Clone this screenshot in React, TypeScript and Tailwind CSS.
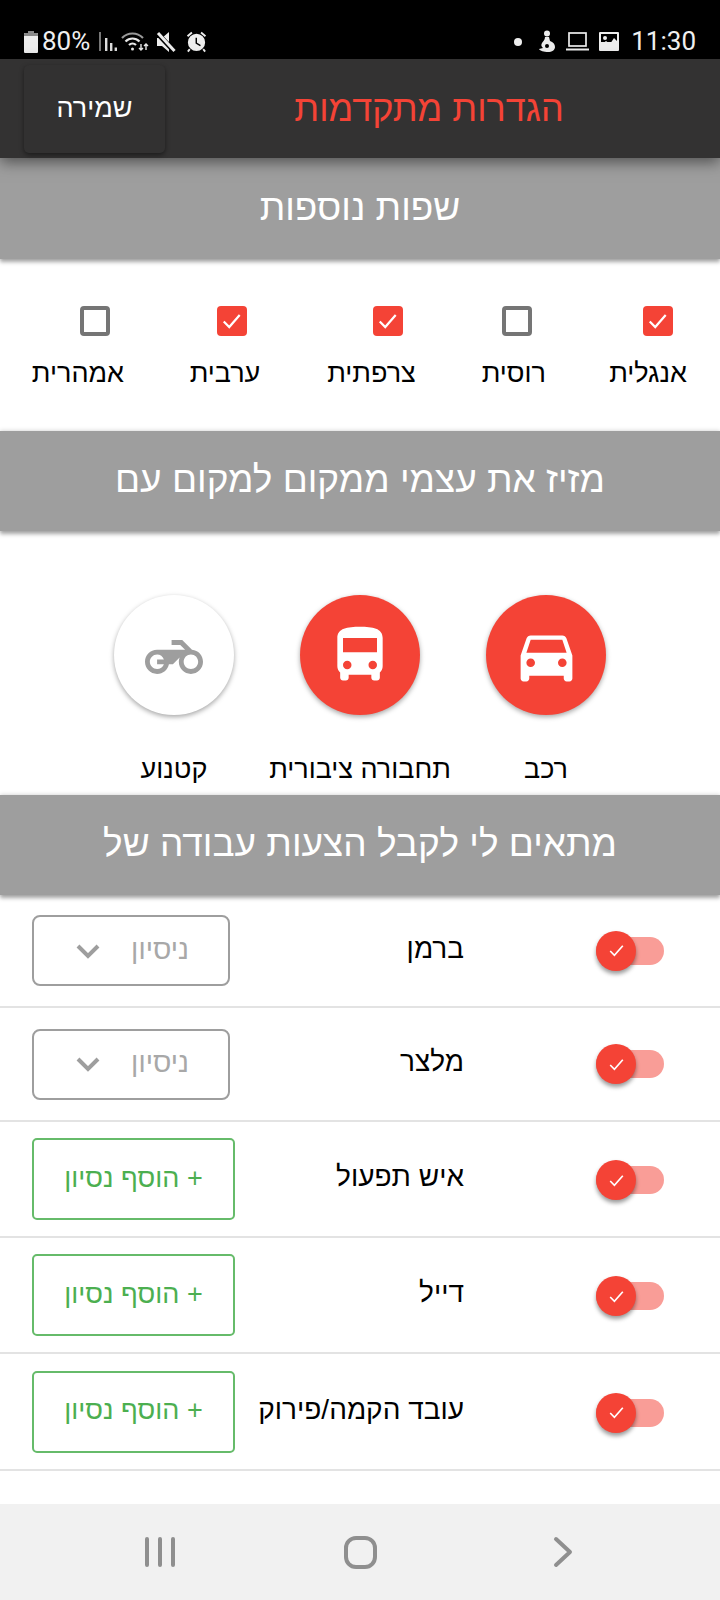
import React from "react";

const font = "font-['Liberation_Sans',sans-serif]";

const CAR = "M18.92 6.01C18.72 5.42 18.16 5 17.5 5h-11c-.66 0-1.21.42-1.42 1.01L3 12v8c0 .55.45 1 1 1h1c.55 0 1-.45 1-1v-1h12v1c0 .55.45 1 1 1h1c.55 0 1-.45 1-1v-8l-2.08-5.99zM6.5 16c-.83 0-1.5-.67-1.5-1.5S5.67 13 6.5 13s1.5.67 1.5 1.5S7.33 16 6.5 16zm11 0c-.83 0-1.5-.67-1.5-1.5s.67-1.5 1.5-1.5 1.5.67 1.5 1.5-.67 1.5-1.5 1.5zM5 11l1.5-4.5h11L19 11H5z";
const BUS = "M4 16c0 .88.39 1.67 1 2.22V20c0 .55.45 1 1 1h1c.55 0 1-.45 1-1v-1h8v1c0 .55.45 1 1 1h1c.55 0 1-.45 1-1v-1.78c.61-.55 1-1.34 1-2.22V6c0-3.5-3.58-4-8-4s-8 .5-8 4v10zm3.5 1c-.83 0-1.5-.67-1.5-1.5S6.67 14 7.5 14s1.5.67 1.5 1.5S8.33 17 7.5 17zm9 0c-.83 0-1.5-.67-1.5-1.5s.67-1.5 1.5-1.5 1.5.67 1.5 1.5-.67 1.5-1.5 1.5zm1.5-6H6V6h12v5z";
const BIKE = "M19.44 9.03L15.41 5H11v2h3.59l2 2H5c-2.8 0-5 2.2-5 5s2.2 5 5 5c2.46 0 4.45-1.69 4.9-4h1.65l2.77-2.77c-.21.54-.32 1.14-.32 1.77 0 2.8 2.2 5 5 5s5-2.2 5-5c0-2.65-1.97-4.77-4.56-4.97zM7.82 15C7.4 16.15 6.28 17 5 17c-1.63 0-3-1.37-3-3s1.37-3 3-3c1.28 0 2.4.85 2.82 2H5v2h2.82zM19 17c-1.66 0-3-1.34-3-3s1.34-3 3-3 3 1.34 3 3-1.34 3-3 3z";

function Band({ children, h = "h-[100px]" }: { children: React.ReactNode; h?: string }) {
  return (
    <div className={`relative z-10 ${h} shrink-0 bg-[#9e9e9e] flex items-center justify-center text-white text-[37px] shadow-[0_3px_4px_rgba(0,0,0,0.35),0_-1px_4px_rgba(0,0,0,0.12)]`}>
      <span className="-mt-[2px]">{children}</span>
    </div>
  );
}

function Check({ on, w, label }: { on: boolean; w: string; label: string }) {
  return (
    <div className={`${w} flex flex-col items-start`}>
      {on ? (
        <div className="mr-[14px] w-[30px] h-[30px] rounded-[4px] bg-[#f44336] flex items-center justify-center">
          <svg width="22" height="22" viewBox="0 0 20 20" fill="none" stroke="#fff" strokeWidth="2"><path d="M2.5 10.5l5 5L17 4.5" /></svg>
        </div>
      ) : (
        <div className="mr-[14px] w-[30px] h-[30px] rounded-[4px] border-[4px] border-[#757575]" />
      )}
      <div className="mt-[19px] w-full text-center text-[27px] leading-[36px] text-black whitespace-nowrap">{label}</div>
    </div>
  );
}

function Transport({ d, on, label, size, nudge }: { d: string; on: boolean; label: string; size: number; nudge?: string }) {
  return (
    <div className="w-[186px] flex flex-col items-center">
      <div className={`w-[120px] h-[120px] rounded-full flex items-center justify-center shadow-[0_2px_5px_rgba(0,0,0,0.35)] ${on ? "bg-[#f44336]" : "bg-white"}`}>
        <svg className={nudge} width={size} height={size} viewBox="0 0 24 24" fill={on ? "#fff" : "#9e9e9e"}><path d={d} /></svg>
      </div>
      <div className="mt-[36px] text-[27px] leading-[36px] text-black whitespace-nowrap">{label}</div>
    </div>
  );
}

function Toggle({ low }: { low?: boolean }) {
  return (
    <div className={`relative w-[68px] h-[40px] shrink-0 flex items-center ${low ? "mt-[2px]" : ""}`}>
      <div className="w-full h-[28px] rounded-full bg-[#f99d97]" />
      <div className="absolute left-0 top-0 w-[40px] h-[40px] rounded-full bg-[#f44336] flex items-center justify-center shadow-[0_3px_4px_rgba(0,0,0,0.4)]">
        <svg width="21" height="21" viewBox="0 0 20 20" fill="none" stroke="#fff" strokeWidth="1.6"><path d="M4 10.5l4 4L16 5.5" /></svg>
      </div>
    </div>
  );
}

function Row({ label, h, green }: { label: string; h: string; green?: boolean }) {
  return (
    <div className={`${h} shrink-0 flex items-center border-b-2 border-[#e3e3e3] pr-[56px] pl-[32px]`}>
      <Toggle low={green} />
      <div className="flex-1 pr-[132px] -mt-[4px] text-[28px] leading-[36px] text-black whitespace-nowrap">{label}</div>
      {green ? (
        <div className="w-[203px] h-[82px] shrink-0 rounded-[5px] border-2 border-[#66bb6a] flex items-center justify-center text-[27px] text-[#4caf50]">
          <span className="-mt-[2px]">+ הוסף נסיון</span>
        </div>
      ) : (
        <div className="w-[198px] h-[71px] shrink-0 rounded-[8px] border-2 border-[#9e9e9e] flex items-center justify-center gap-[31px] pl-[3px] text-[28px] text-[#a8a8a8]">
          <span className="-mt-[2px]">ניסיון</span>
          <svg width="24" height="16" viewBox="0 0 24 16" fill="none" stroke="#9e9e9e" strokeWidth="4"><path d="M2 3l10 10L22 3" /></svg>
        </div>
      )}
    </div>
  );
}

export default function App() {
  return (
    <div dir="rtl" className={`${font} w-[720px] h-[1600px] bg-white flex flex-col overflow-hidden`}>
      <div dir="ltr" className="h-[59px] shrink-0 bg-black text-[#f0f0f0] flex items-center justify-between pl-[24px] pr-[24px] pt-[24px] font-['Roboto',sans-serif] text-[26px]">
        <div className="flex items-center">
          <svg width="14" height="22" viewBox="0 0 14 22" fill="#eee"><path d="M4 0h6v2h3a1 1 0 011 1v18a1 1 0 01-1 1H1a1 1 0 01-1-1V3a1 1 0 011-1h3z" /><path d="M4 0h6v2h3a1 1 0 011 1v2H0V3a1 1 0 011-1h3z" fill="#8a8a8a" /></svg>
          <span className="ml-[4px] leading-[25px]">80%</span>
          <svg className="ml-[9px]" width="18" height="19" viewBox="0 0 18 19" fill="#ddd"><rect x="0" y="0" width="2" height="19" fill="#777" /><rect x="6" y="6" width="2.4" height="13" /><rect x="11" y="11" width="2.4" height="8" /><rect x="15.6" y="15.5" width="2.4" height="3.5" /></svg>
          <svg className="ml-[4px]" width="28" height="21" viewBox="0 0 28 21" fill="none" stroke="#e8e8e8" strokeWidth="2.2"><path d="M1 7c6-6 15-6 21 0" stroke="#999" /><path d="M4.5 10.5c4-4 10-4 14 0" /><path d="M8 14c2-2 5-2 7 0" /><circle cx="11.5" cy="18" r="1.5" fill="#e8e8e8" stroke="none" /><path d="M20 13v6M18 17l2 2 2-2M25 19v-6M23 15l2-2 2 2" strokeWidth="1.4" /></svg>
          <svg className="ml-[7px]" width="20" height="22" viewBox="0 0 20 22"><path d="M1 7h5l7-6v20l-7-6H1z" fill="#eee" /><path d="M1 2l17 18" stroke="#000" strokeWidth="5" /><path d="M2 2l16.5 18" stroke="#eee" strokeWidth="3" /></svg>
          <svg className="ml-[9px]" width="23" height="23" viewBox="0 0 24 24" fill="#eee"><path d="M22 5.72l-4.6-3.86-1.29 1.53 4.6 3.86L22 5.72zM7.88 3.39L6.6 1.86 2 5.71l1.29 1.53 4.59-3.85zM12 4a9 9 0 100 18 9 9 0 000-18z" /><path d="M12.5 8H11v6l4.75 2.85.75-1.23-4-2.37z" fill="#000" /><path d="M5 20l-2 2.5M19 20l2 2.5" stroke="#eee" strokeWidth="2" /></svg>
        </div>
        <div className="flex items-center">
          <div className="w-[8px] h-[8px] rounded-full bg-[#eee]" />
          <svg className="ml-[16px]" width="18" height="23" viewBox="0 0 18 23" fill="#eee"><circle cx="9" cy="3.5" r="3" /><path d="M7 7h4l1 4c3 1 5 3 5 6 0 3-3 5-7 5-4 0-8-1-9-3l4-1c-2-2-2-3-1-5 1-2 3-3 3-6z" /><circle cx="9" cy="16" r="2" fill="#000" /></svg>
          <svg className="ml-[10px]" width="23" height="19" viewBox="0 0 23 19" fill="none" stroke="#eee" strokeWidth="1.7"><rect x="3" y="1" width="17" height="13" /><path d="M0 17.5h23" strokeWidth="2" /></svg>
          <svg className="ml-[10px]" width="20" height="19" viewBox="0 0 20 19"><rect width="20" height="19" rx="1" fill="#eee" /><rect x="2" y="2" width="16" height="8" fill="#000" /><circle cx="6" cy="6" r="2" fill="#eee" /><path d="M2 13l5-4 4 3 4-6 3 3v5H2z" fill="#eee" /></svg>
          <span className="ml-[12px] leading-[25px]">11:30</span>
        </div>
      </div>

      <div className="relative z-20 h-[99px] shrink-0 bg-[#333232] flex items-center pr-[156px] pl-[24px] shadow-[0_4px_14px_rgba(0,0,0,0.5)]">
        <div className="flex-1 text-center text-[36px] text-[#f44336] whitespace-nowrap"><span className="-mt-[2px] inline-block">הגדרות מתקדמות</span></div>
        <div className="mr-[129px] w-[141px] h-[88px] shrink-0 rounded-[5px] bg-[#323131] text-white text-[27px] flex items-center justify-center shadow-[0_2px_5px_rgba(0,0,0,0.45)]">שמירה</div>
      </div>

      <Band h="h-[101px]">שפות נוספות</Band>

      <div className="h-[172px] shrink-0 flex justify-between px-[33px] pt-[47px]">
        <Check on w="w-[76px]" label="אנגלית" />
        <Check on={false} w="w-[64px]" label="רוסית" />
        <Check on w="w-[91px]" label="צרפתית" />
        <Check on w="w-[72px]" label="ערבית" />
        <Check on={false} w="w-[91px]" label="אמהרית" />
      </div>

      <Band>מזיז את עצמי ממקום למקום עם</Band>

      <div className="h-[264px] shrink-0 flex justify-center pt-[64px]">
        <Transport d={CAR} on label="רכב" size={69} />
        <Transport d={BUS} on label="תחבורה ציבורית" size={68} />
        <Transport d={BIKE} on={false} label="קטנוע" size={58} nudge="mt-[3px]" />
      </div>

      <Band>מתאים לי לקבל הצעות עבודה של</Band>

      <Row label="ברמן" h="h-[113px]" />
      <Row label="מלצר" h="h-[114px]" />
      <Row label="איש תפעול" h="h-[116px]" green />
      <Row label="דייל" h="h-[116px]" green />
      <Row label="עובד הקמה/פירוק" h="h-[117px]" green />

      <div className="flex-1" />
      <div dir="ltr" className="h-[96px] shrink-0 bg-[#f1f1f1] flex items-center pl-[145px]">
        <svg width="30" height="32" viewBox="0 0 30 32" fill="none" stroke="#8f8f8f" strokeWidth="4" strokeLinecap="round"><path d="M2 3v26M15 3v26M28 3v26" /></svg>
        <svg className="ml-[169px]" width="33" height="33" viewBox="0 0 33 33" fill="none" stroke="#8f8f8f" strokeWidth="4"><rect x="2" y="2" width="29" height="29" rx="10" /></svg>
        <svg className="ml-[176px]" width="20" height="32" viewBox="0 0 20 32" fill="none" stroke="#8f8f8f" strokeWidth="4" strokeLinecap="round" strokeLinejoin="round"><path d="M3 3l14 13L3 29" /></svg>
      </div>
    </div>
  );
}
